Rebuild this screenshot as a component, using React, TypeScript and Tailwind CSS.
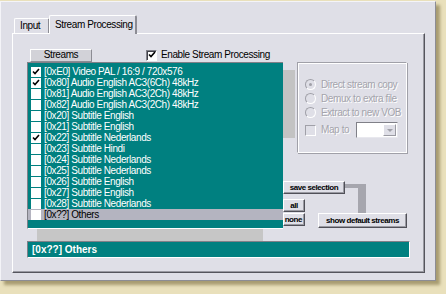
import React from "react";

const streams: { label: string; checked: boolean; selected?: boolean }[] = [
  { label: "[0xE0] Video PAL / 16:9 / 720x576", checked: true },
  { label: "[0x80] Audio English AC3(6Ch) 48kHz", checked: true },
  { label: "[0x81] Audio English AC3(2Ch) 48kHz", checked: false },
  { label: "[0x82] Audio English AC3(2Ch) 48kHz", checked: false },
  { label: "[0x20] Subtitle English", checked: false },
  { label: "[0x21] Subtitle English", checked: false },
  { label: "[0x22] Subtitle Nederlands", checked: true },
  { label: "[0x23] Subtitle Hindi", checked: false },
  { label: "[0x24] Subtitle Nederlands", checked: false },
  { label: "[0x25] Subtitle Nederlands", checked: false },
  { label: "[0x26] Subtitle English", checked: false },
  { label: "[0x27] Subtitle English", checked: false },
  { label: "[0x28] Subtitle Nederlands", checked: false },
  { label: "[0x??] Others", checked: false, selected: true },
];

function Check() {
  return (
    <svg width="8" height="8" viewBox="0 0 8 8" className="block">
      <path d="M1 3.5 L3 5.5 L7 1" stroke="#000" strokeWidth="1.6" fill="none" />
    </svg>
  );
}

function Radio({ on }: { on?: boolean }) {
  return (
    <div className="w-[11px] h-[11px] shrink-0 rounded-full border border-t-[#a0a0a8] border-l-[#a0a0a8] border-r-white border-b-white bg-[#dfdfe7] flex items-center justify-center">
      {on && <div className="w-[3px] h-[3px] rounded-full bg-[#a0a0a8]" />}
    </div>
  );
}

const btn =
  "bg-[#dfdfe7] border border-t-white border-l-white border-r-[#505058] border-b-[#505058] shadow-[inset_-1px_-1px_0_#9a9aa2] flex items-center justify-center font-bold text-[8px] tracking-[-0.45px] text-black whitespace-nowrap";

const dis = "text-[#a4a4ac] [text-shadow:1px_1px_0_#ffffff] whitespace-nowrap";

export default function App() {
  return (
    <div className="w-[446px] h-[294px] bg-[#e9e0bb] pt-[1px] font-['Liberation_Sans',Arial,sans-serif] text-[10px] tracking-[-0.4px] leading-none overflow-hidden">
      {/* window */}
      <div className="w-[436px] h-[280px] bg-[#dfdfe7] border border-t-[#f4f4f8] border-l-[#f4f4f8] border-r-[#8c8c94] border-b-[#8c8c94] shadow-[4px_4px_3px_#a89c72] pl-[11px] pt-[12px]">
        {/* tabs */}
        <div className="flex items-end h-[19px] relative z-10">
          <div className="ml-[2px] w-[36px] h-[15px] border-t border-l border-white border-r-2 border-r-[#8c8c94] rounded-t-[2px] flex items-center pl-[5px] text-black whitespace-nowrap">
            Input
          </div>
          <div className="-ml-[1px] w-[88px] h-[19px] mb-[-1px] bg-[#dfdfe7] border-t border-l border-white border-r-2 border-r-[#8c8c94] rounded-t-[2px] flex items-center pl-[5px] text-black whitespace-nowrap">
            Stream Processing
          </div>
        </div>

        {/* tab panel */}
        <div className="w-[413px] h-[240px] border border-t-white border-l-white border-r-[#55555d] border-b-[#55555d] shadow-[inset_-1px_-1px_0_#9a9aa2] flex flex-col">
          {/* header row */}
          <div className="flex items-center mt-[14px] h-[14px]">
            <div className="ml-[17px] w-[62px] h-[13px] bg-[#d2d2d8] border border-t-white border-l-white border-r-[#8c8c94] border-b-[#8c8c94] flex items-center justify-center text-black">
              Streams
            </div>
            <div className="ml-[54px] w-[11px] h-[11px] bg-white border border-t-[#808088] border-l-[#808088] border-r-white border-b-white shadow-[inset_1px_1px_0_#404048] flex items-center justify-center">
              <Check />
            </div>
            <div className="ml-[4px] text-black whitespace-nowrap">Enable Stream Processing</div>
          </div>

          {/* middle */}
          <div className="flex ml-[14px]">
            <div className="flex flex-col">
              <div className="w-[256px] h-[167px] bg-[#008080] border-l border-t border-[#808088] border-b border-b-white pt-[3px]">
                {streams.map((s) => (
                  <div
                    key={s.label}
                    className={`h-[11px] flex items-center pl-[3px] ${s.selected ? "bg-[#b4b4c0] text-black" : "text-white"}`}
                  >
                    <div className="w-[10px] h-[10px] bg-white flex items-center justify-center shrink-0">
                      {s.checked && <Check />}
                    </div>
                    <span className="ml-[3px] whitespace-nowrap">{s.label}</span>
                  </div>
                ))}
              </div>
              <div className="ml-[10px] w-[226px] h-[12px] bg-[#c6c6c6]" />
            </div>

            {/* right column */}
            <div className="relative flex-1">
              <div className="flex">
                <div className="mt-[8px] w-[12px] h-[68px] bg-[#c3c3c3]" />
                <div className="ml-[2px] w-[110px] h-[91px] border border-t-[#a0a0a8] border-l-[#a0a0a8] border-r-white border-b-white shadow-[inset_1px_1px_0_#ffffff,1px_1px_0_#a0a0a8] pl-[7px] pt-[16px] flex flex-col gap-[3px]">
                  <div className={`flex items-center gap-[5px] h-[11px] ${dis}`}>
                    <Radio on /> Direct stream copy
                  </div>
                  <div className={`flex items-center gap-[5px] h-[11px] ${dis}`}>
                    <Radio /> Demux to extra file
                  </div>
                  <div className={`flex items-center gap-[5px] h-[11px] ${dis}`}>
                    <Radio /> Extract to new VOB
                  </div>
                  <div className={`flex items-center mt-[1px] h-[16px] ${dis}`}>
                    <div className="w-[11px] h-[11px] shrink-0 border border-t-[#a0a0a8] border-l-[#a0a0a8] border-r-white border-b-white" />
                    <span className="ml-[5px]">Map to</span>
                    <div className="ml-[7px] w-[42px] h-[16px] bg-white border border-t-[#808088] border-l-[#808088] border-r-[#e8e8ee] border-b-[#e8e8ee] flex justify-end items-center pr-[1px]">
                      <div className="w-[13px] h-[12px] bg-[#dfdfe7] border border-t-white border-l-white border-r-[#9a9aa2] border-b-[#9a9aa2] flex items-center justify-center">
                        <div className="w-0 h-0 border-l-[3px] border-r-[3px] border-t-[3px] border-l-transparent border-r-transparent border-t-[#a0a0a8]" />
                      </div>
                    </div>
                  </div>
                </div>
              </div>

              {/* selection buttons */}
              <div className={`absolute left-0 top-[119px] w-[62px] h-[13px] z-10 ${btn}`}>save selection</div>
              <div className="absolute left-[62px] top-[122px] w-[21px] h-[4px] bg-[#a6a6ae]" />
              <div className="absolute left-[75px] top-[122px] w-[8px] h-[29px] bg-[#a6a6ae]" />
              <div className={`absolute left-0 top-[137px] w-[22px] h-[13px] ${btn}`}>all</div>
              <div className={`absolute left-0 top-[151px] w-[22px] h-[13px] ${btn} justify-end pr-[2px] overflow-hidden`}>none</div>
              <div className={`absolute left-[35px] top-[151px] w-[89px] h-[15px] ${btn}`}>show default streams</div>
            </div>
          </div>

          {/* bottom bar */}
          <div className="ml-[14px] w-[383px] h-[17px] bg-[#008080] border border-t-[#808088] border-l-[#808088] border-r-white border-b-white flex items-center pl-[4px] text-white font-bold text-[10px] tracking-normal">
            [0x??] Others
          </div>
        </div>
      </div>
    </div>
  );
}
